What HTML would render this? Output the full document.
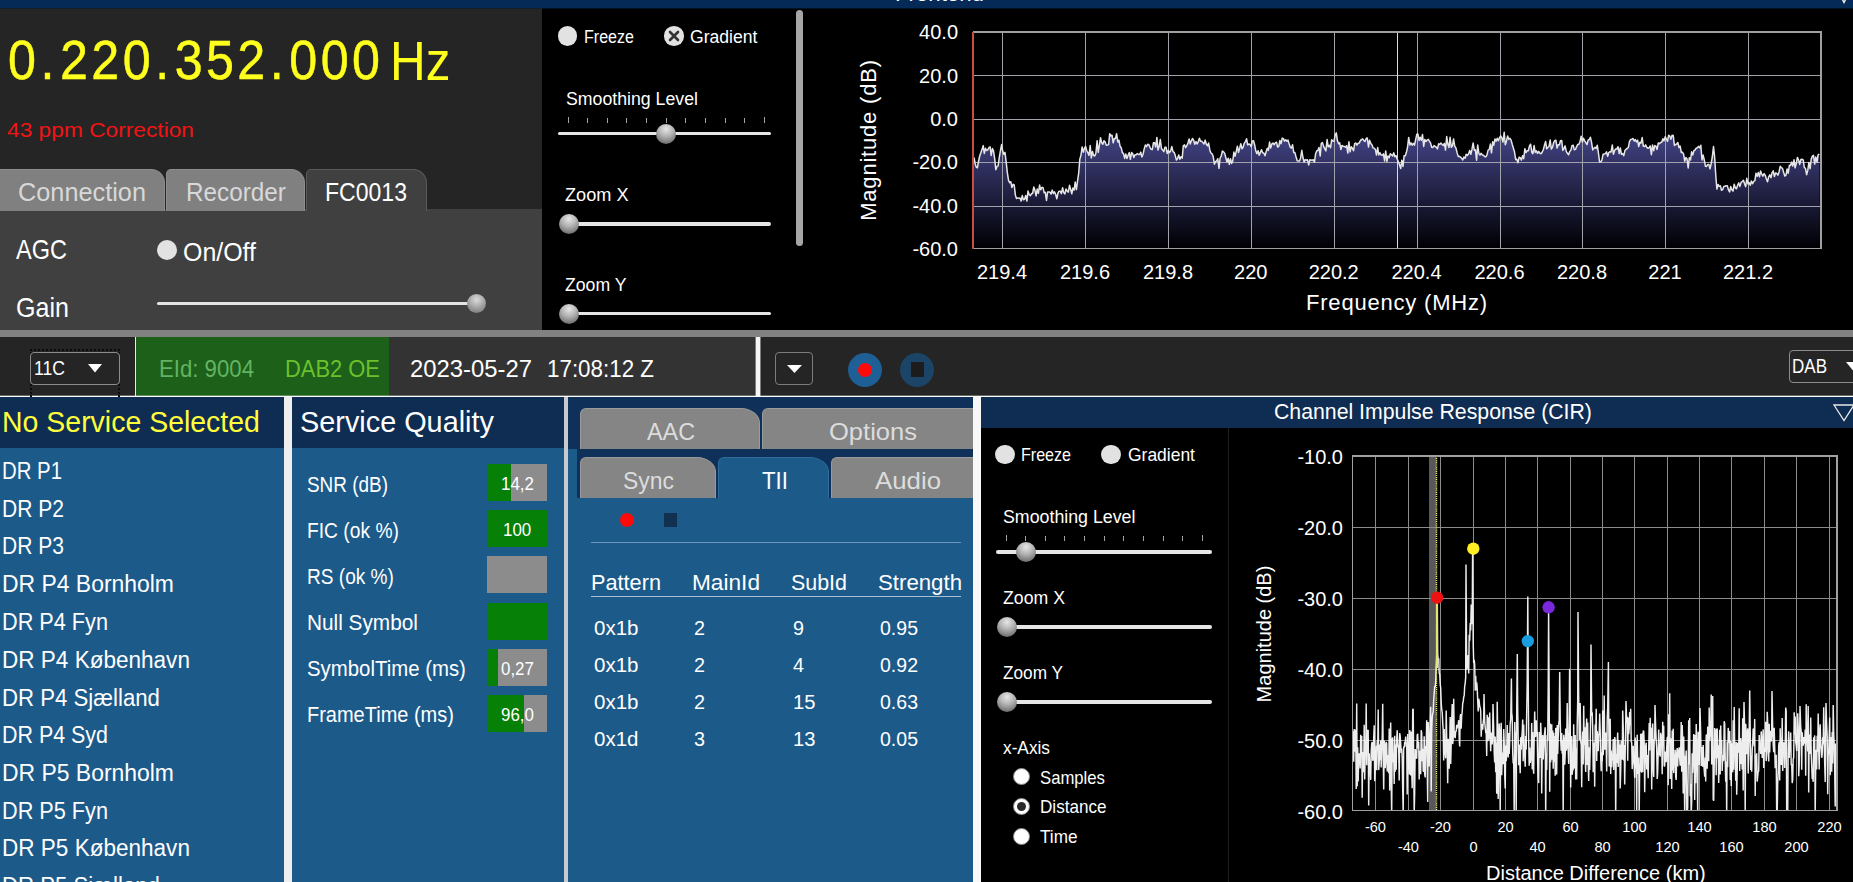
<!DOCTYPE html>
<html><head><meta charset="utf-8"><title>Frontend</title>
<style>
html,body{margin:0;padding:0;background:#000;}
body{width:1853px;height:882px;overflow:hidden;position:relative;font-family:"Liberation Sans",sans-serif;}
#app{position:absolute;left:0;top:0;width:1853px;height:882px;overflow:hidden;background:#000;}
#app div{position:absolute;box-sizing:border-box;}
#app svg{position:absolute;overflow:visible;}
#app svg rect{shape-rendering:crispEdges;}
.t{position:absolute;white-space:pre;transform-origin:0 50%;}
</style></head><body><div id="app">
<div style="left:0px;top:0px;width:1853px;height:8px;background:#052a57;"></div>
<div style="left:0px;top:8px;width:1853px;height:1px;background:#021326;"></div>
<span class="t" style="left:895px;top:-17px;font-size:21.8px;line-height:21.8px;color:#fff;transform:scaleX(1.0200);">Frontend</span>
<svg style="left:1838px;top:-9px" width="12" height="12" viewBox="0 0 12 12"><path d="M0 0 H12 L6 11.5 Z" fill="none" stroke="#f0f0f0" stroke-width="1.4"/></svg>
<div style="left:0px;top:9px;width:542px;height:321px;background:#252525;"></div>
<div style="left:0px;top:8px;width:542px;height:1px;background:#15202c;"></div>
<span class="t" style="left:8px;top:32px;font-size:55.8px;line-height:55.8px;color:#ffff1e;letter-spacing:3.8px;-webkit-text-stroke:0.5px #ffff1e;transform:scaleX(0.9);">0<span style="margin:0 2.3px 0 1.3px">.</span>220<span style="margin:0 2.3px 0 1.3px">.</span>352<span style="margin:0 2.3px 0 1.3px">.</span>000</span>
<span class="t" style="left:389.5px;top:34px;font-size:55.7px;line-height:55.7px;color:#ffff1e;transform:scaleX(0.8887);">Hz</span>
<span class="t" style="left:7px;top:119px;font-size:21.08px;line-height:21.08px;color:#f01414;transform:scaleX(1.0784);">43 ppm Correction</span>
<div style="left:0px;top:209px;width:542px;height:121px;background:#404040;"></div>
<div style="left:0px;top:169px;width:165px;height:42px;background:#808080;border-radius:0 14px 0 0;border-top:1px solid #8e8e8e;border-right:1px solid #8e8e8e;"></div>
<div style="left:166px;top:169px;width:139px;height:42px;background:#808080;border-radius:5px 14px 0 0;border:1px solid #8e8e8e;border-bottom:none;"></div>
<div style="left:306px;top:169px;width:121px;height:42px;background:#404040;border-radius:5px 14px 0 0;border:1px solid #5a5a5a;border-bottom:none;"></div>
<span class="t" style="left:18px;top:180px;font-size:25.87px;line-height:25.87px;color:#d8d8d8;transform:scaleX(0.9780);">Connection</span>
<span class="t" style="left:186px;top:180px;font-size:25.87px;line-height:25.87px;color:#d8d8d8;transform:scaleX(0.9399);">Recorder</span>
<span class="t" style="left:325px;top:180px;font-size:25.87px;line-height:25.87px;color:#fff;transform:scaleX(0.8910);">FC0013</span>
<span class="t" style="left:16px;top:237px;font-size:26.89px;line-height:26.89px;color:#fff;transform:scaleX(0.8752);">AGC</span>
<div style="left:157px;top:240px;width:20px;height:20px;background:#e2e2e2;border-radius:50%;"></div>
<span class="t" style="left:183px;top:240px;font-size:25.44px;line-height:25.44px;color:#fff;transform:scaleX(0.9803);">On/Off</span>
<span class="t" style="left:16px;top:295px;font-size:26.89px;line-height:26.89px;color:#fff;transform:scaleX(0.9331);">Gain</span>
<div style="left:157px;top:301.5px;width:320px;height:3px;background:#e4e4e4;border-radius:2px;"></div>
<div style="left:467px;top:294px;width:19px;height:19px;background:radial-gradient(circle at 50% 30%,#dcdcdc 0%,#a8a8a8 45%,#6c6c6c 100%);border-radius:50%;"></div>
<div style="left:557.75px;top:26.25px;width:19.5px;height:19.5px;background:#e2e2e2;border-radius:50%;"></div>
<span class="t" style="left:584px;top:28px;font-size:18.9px;line-height:18.9px;color:#fff;transform:scaleX(0.8500);">Freeze</span>
<div style="left:664.25px;top:26.25px;width:19.5px;height:19.5px;background:#e2e2e2;border-radius:50%;"></div>
<svg style="left:667px;top:29px" width="14" height="14" viewBox="0 0 14 14"><path d="M3 3 L11 11 M11 3 L3 11" stroke="#333" stroke-width="2.6" stroke-linecap="round"/></svg>
<span class="t" style="left:690px;top:28px;font-size:18.9px;line-height:18.9px;color:#fff;transform:scaleX(0.9312);">Gradient</span>
<span class="t" style="left:565.5px;top:90px;font-size:18.9px;line-height:18.9px;color:#fff;transform:scaleX(0.9376);">Smoothing Level</span>
<div style="left:568px;top:116.5px;width:1px;height:6.5px;background:#a4a4a4;"></div>
<div style="left:587px;top:117.5px;width:1px;height:5.5px;background:#a4a4a4;"></div>
<div style="left:607px;top:117.5px;width:1px;height:5.5px;background:#a4a4a4;"></div>
<div style="left:626px;top:117.5px;width:1px;height:5.5px;background:#a4a4a4;"></div>
<div style="left:646px;top:117.5px;width:1px;height:5.5px;background:#a4a4a4;"></div>
<div style="left:666px;top:117.5px;width:1px;height:5.5px;background:#a4a4a4;"></div>
<div style="left:685px;top:117.5px;width:1px;height:5.5px;background:#a4a4a4;"></div>
<div style="left:705px;top:117.5px;width:1px;height:5.5px;background:#a4a4a4;"></div>
<div style="left:725px;top:117.5px;width:1px;height:5.5px;background:#a4a4a4;"></div>
<div style="left:744px;top:117.5px;width:1px;height:5.5px;background:#a4a4a4;"></div>
<div style="left:764px;top:116.5px;width:1px;height:6.5px;background:#a4a4a4;"></div>
<div style="left:558px;top:131.5px;width:213px;height:3.5px;background:#e6e6e6;border-radius:2px;"></div>
<div style="left:656.0px;top:124.0px;width:20px;height:20px;background:radial-gradient(circle at 50% 25%,#e6e6e6 0%,#b4b4b4 40%,#6a6a6a 85%,#555 100%);border-radius:50%;"></div>
<span class="t" style="left:564.5px;top:186px;font-size:18.9px;line-height:18.9px;color:#fff;transform:scaleX(0.9597);">Zoom X</span>
<div style="left:560px;top:222.0px;width:211px;height:3.5px;background:#e6e6e6;border-radius:2px;"></div>
<div style="left:558.5px;top:214.0px;width:20px;height:20px;background:radial-gradient(circle at 50% 25%,#e6e6e6 0%,#b4b4b4 40%,#6a6a6a 85%,#555 100%);border-radius:50%;"></div>
<span class="t" style="left:564.5px;top:276px;font-size:18.9px;line-height:18.9px;color:#fff;transform:scaleX(0.9343);">Zoom Y</span>
<div style="left:560px;top:311.5px;width:211px;height:3.5px;background:#e6e6e6;border-radius:2px;"></div>
<div style="left:558.5px;top:303.5px;width:20px;height:20px;background:radial-gradient(circle at 50% 25%,#e6e6e6 0%,#b4b4b4 40%,#6a6a6a 85%,#555 100%);border-radius:50%;"></div>
<div style="left:796px;top:10px;width:7px;height:236px;background:#a6a6a6;border-radius:4px;"></div>
<div style="left:0px;top:330px;width:1853px;height:7px;background:#828282;"></div>
<div style="left:0px;top:337px;width:1853px;height:59px;background:#252525;"></div>
<div style="left:389px;top:337px;width:366px;height:59px;background:#333333;"></div>
<div style="left:136px;top:337px;width:253px;height:59px;background:#1c601a;"></div>
<div style="left:135px;top:337px;width:1px;height:59px;background:#e4ece4;"></div>
<div style="left:755px;top:337px;width:6px;height:59px;background:rgba(255,255,255,.4);"></div>
<div style="left:756px;top:337px;width:4px;height:59px;background:#f6f6f6;"></div>
<div style="left:0px;top:395px;width:1853px;height:3px;background:rgba(255,255,255,.3);"></div>
<div style="left:0px;top:396px;width:1853px;height:1px;background:#fff;"></div>
<div style="left:30px;top:349px;width:90px;height:48px;background:transparent;border:2px dotted #0a0a0a;border-bottom:none;"></div>
<div style="left:30px;top:352px;width:90px;height:33px;background:#252525;border:1px solid #8c8c8c;border-radius:4px;"></div>
<span class="t" style="left:34px;top:358px;font-size:20.35px;line-height:20.35px;color:#fff;transform:scaleX(0.8654);">11C</span>
<svg style="left:88px;top:364px" width="14" height="9" viewBox="0 0 14 9"><path d="M0 0 H14 L7 8.5 Z" fill="#fff"/></svg>
<span class="t" style="left:159px;top:357px;font-size:24.71px;line-height:24.71px;color:#62b462;transform:scaleX(0.8980);">EId: 9004</span>
<span class="t" style="left:285px;top:357px;font-size:24.71px;line-height:24.71px;color:#6cc02c;transform:scaleX(0.8869);">DAB2 OE</span>
<span class="t" style="left:410px;top:357px;font-size:24.71px;line-height:24.71px;color:#fff;transform:scaleX(0.9652);">2023-05-27</span>
<span class="t" style="left:547px;top:357px;font-size:24.71px;line-height:24.71px;color:#fff;transform:scaleX(0.9057);">17:08:12 Z</span>
<div style="left:775px;top:352px;width:38px;height:33px;background:#252525;border:1px solid #7c7c7c;border-radius:4px;"></div>
<svg style="left:786.5px;top:364.5px" width="15" height="8" viewBox="0 0 15 8"><path d="M0 0 H15 L7.5 8 Z" fill="#fff"/></svg>
<div style="left:848px;top:352.5px;width:34px;height:34px;background:#1e5f96;border-radius:50%;"></div>
<div style="left:858px;top:362.5px;width:14px;height:14px;background:#ff0a0a;border-radius:50%;"></div>
<div style="left:900px;top:352.5px;width:34px;height:34px;background:#1b4466;border-radius:50%;"></div>
<div style="left:910.5px;top:362px;width:13.5px;height:14.5px;background:#1c1c1c;"></div>
<div style="left:1789px;top:350px;width:80px;height:33px;background:#252525;border:1px solid #8c8c8c;border-radius:4px;"></div>
<span class="t" style="left:1792px;top:357px;font-size:19.62px;line-height:19.62px;color:#fff;transform:scaleX(0.8676);">DAB</span>
<svg style="left:1846px;top:362px" width="14" height="9" viewBox="0 0 14 9"><path d="M0 0 H14 L7 8.5 Z" fill="#fff"/></svg>
<div style="left:0px;top:397px;width:284px;height:51px;background:#0f2c52;"></div>
<div style="left:0px;top:448px;width:284px;height:434px;background:#1c5a8a;"></div>
<span class="t" style="left:2px;top:408px;font-size:29.07px;line-height:29.07px;color:#ffff3c;transform:scaleX(0.9796);">No Service Selected</span>
<span class="t" style="left:2px;top:459px;font-size:23.98px;line-height:23.98px;color:#fff;transform:scaleX(0.8495);">DR P1</span>
<span class="t" style="left:2px;top:497px;font-size:23.98px;line-height:23.98px;color:#fff;transform:scaleX(0.8778);">DR P2</span>
<span class="t" style="left:2px;top:534px;font-size:23.98px;line-height:23.98px;color:#fff;transform:scaleX(0.8778);">DR P3</span>
<span class="t" style="left:2px;top:572px;font-size:23.98px;line-height:23.98px;color:#fff;transform:scaleX(0.9560);">DR P4 Bornholm</span>
<span class="t" style="left:2px;top:610px;font-size:23.98px;line-height:23.98px;color:#fff;transform:scaleX(0.9039);">DR P4 Fyn</span>
<span class="t" style="left:2px;top:648px;font-size:23.98px;line-height:23.98px;color:#fff;transform:scaleX(0.9403);">DR P4 København</span>
<span class="t" style="left:2px;top:686px;font-size:23.98px;line-height:23.98px;color:#fff;transform:scaleX(0.9261);">DR P4 Sjælland</span>
<span class="t" style="left:2px;top:723px;font-size:23.98px;line-height:23.98px;color:#fff;transform:scaleX(0.8937);">DR P4 Syd</span>
<span class="t" style="left:2px;top:761px;font-size:23.98px;line-height:23.98px;color:#fff;transform:scaleX(0.9560);">DR P5 Bornholm</span>
<span class="t" style="left:2px;top:799px;font-size:23.98px;line-height:23.98px;color:#fff;transform:scaleX(0.9039);">DR P5 Fyn</span>
<span class="t" style="left:2px;top:836px;font-size:23.98px;line-height:23.98px;color:#fff;transform:scaleX(0.9403);">DR P5 København</span>
<span class="t" style="left:2px;top:874px;font-size:23.98px;line-height:23.98px;color:#fff;transform:scaleX(0.9261);">DR P5 Sjælland</span>
<div style="left:284px;top:397px;width:8px;height:485px;background:#f0eff0;"></div>
<div style="left:292px;top:397px;width:272px;height:51px;background:#0f2c52;"></div>
<div style="left:292px;top:448px;width:272px;height:434px;background:#1c5a8a;"></div>
<span class="t" style="left:300px;top:408px;font-size:29.07px;line-height:29.07px;color:#fff;transform:scaleX(0.9924);">Service Quality</span>
<span class="t" style="left:307px;top:474px;font-size:22.53px;line-height:22.53px;color:#fff;transform:scaleX(0.8403);">SNR (dB)</span>
<div style="left:487px;top:464px;width:60px;height:37px;background:#8c8c8c;"></div>
<div style="left:487px;top:464px;width:24.0px;height:37px;background:#078007;"></div>
<span class="t" style="left:500.528489546875px;top:475px;font-size:18.2px;line-height:18.2px;color:#fff;transform:scaleX(0.9300);">14,2</span>
<span class="t" style="left:307px;top:520px;font-size:22.53px;line-height:22.53px;color:#fff;transform:scaleX(0.8547);">FIC (ok %)</span>
<div style="left:487px;top:510px;width:60px;height:37px;background:#8c8c8c;"></div>
<div style="left:487px;top:510px;width:60.0px;height:37px;background:#078007;"></div>
<span class="t" style="left:502.87974896875px;top:521px;font-size:18.2px;line-height:18.2px;color:#fff;transform:scaleX(0.9300);">100</span>
<span class="t" style="left:307px;top:566px;font-size:22.53px;line-height:22.53px;color:#fff;transform:scaleX(0.8475);">RS (ok %)</span>
<div style="left:487px;top:556px;width:60px;height:37px;background:#8c8c8c;"></div>
<span class="t" style="left:307px;top:612px;font-size:22.53px;line-height:22.53px;color:#fff;transform:scaleX(0.9235);">Null Symbol</span>
<div style="left:487px;top:603px;width:60px;height:37px;background:#8c8c8c;"></div>
<div style="left:487px;top:603px;width:60.0px;height:37px;background:#078007;"></div>
<span class="t" style="left:307px;top:658px;font-size:22.53px;line-height:22.53px;color:#fff;transform:scaleX(0.9052);">SymbolTime (ms)</span>
<div style="left:487px;top:649px;width:60px;height:37px;background:#8c8c8c;"></div>
<div style="left:487px;top:649px;width:10.8px;height:37px;background:#078007;"></div>
<span class="t" style="left:500.528489546875px;top:660px;font-size:18.2px;line-height:18.2px;color:#fff;transform:scaleX(0.9300);">0,27</span>
<span class="t" style="left:307px;top:704px;font-size:22.53px;line-height:22.53px;color:#fff;transform:scaleX(0.8876);">FrameTime (ms)</span>
<div style="left:487px;top:695px;width:60px;height:37px;background:#8c8c8c;"></div>
<div style="left:487px;top:695px;width:37.2px;height:37px;background:#078007;"></div>
<span class="t" style="left:500.528489546875px;top:706px;font-size:18.2px;line-height:18.2px;color:#fff;transform:scaleX(0.9300);">96,0</span>
<div style="left:564px;top:397px;width:4px;height:485px;background:#c9cacd;"></div>
<div style="left:568px;top:397px;width:405px;height:52px;background:#0f3058;"></div>
<div style="left:568px;top:449px;width:405px;height:433px;background:#1c5a8a;"></div>
<div style="left:577px;top:449px;width:396px;height:49px;background:#0f3058;"></div>
<div style="left:580px;top:408px;width:180px;height:41px;background:#858585;border-radius:6px 19px 0 0 / 6px 15px 0 0;border:1px solid #9a9a9a;border-bottom:none;"></div>
<span class="t" style="left:647px;top:420px;font-size:24.71px;line-height:24.71px;color:#dcdcdc;transform:scaleX(0.9447);">AAC</span>
<div style="left:762px;top:408px;width:211px;height:41px;background:#858585;border-radius:6px 0 0 0;border:1px solid #9a9a9a;border-bottom:none;border-right:none;"></div>
<span class="t" style="left:829px;top:420px;font-size:24.71px;line-height:24.71px;color:#dcdcdc;transform:scaleX(1.0334);">Options</span>
<div style="left:580px;top:457px;width:136px;height:40.5px;background:#858585;border-radius:6px 19px 0 0 / 6px 15px 0 0;border:1px solid #9a9a9a;border-bottom:none;"></div>
<span class="t" style="left:623px;top:469px;font-size:24.71px;line-height:24.71px;color:#dcdcdc;transform:scaleX(0.9284);">Sync</span>
<div style="left:718px;top:457px;width:111px;height:41px;background:#1c5a8a;border-radius:6px 19px 0 0 / 6px 15px 0 0;border:1px solid #2f6c9c;border-bottom:none;"></div>
<span class="t" style="left:762px;top:469px;font-size:24.71px;line-height:24.71px;color:#fff;transform:scaleX(0.9020);">TII</span>
<div style="left:831px;top:457px;width:142px;height:40.5px;background:#858585;border-radius:6px 0 0 0;border:1px solid #9a9a9a;border-bottom:none;border-right:none;"></div>
<span class="t" style="left:875px;top:469px;font-size:24.71px;line-height:24.71px;color:#dcdcdc;transform:scaleX(1.0443);">Audio</span>
<div style="left:620px;top:513px;width:14px;height:14px;background:#ff0a0a;border-radius:50%;"></div>
<div style="left:664px;top:513px;width:13px;height:14px;background:#12304f;"></div>
<div style="left:590.5px;top:542px;width:370.5px;height:1px;background:#6f97ba;"></div>
<span class="t" style="left:591px;top:572px;font-size:21.8px;line-height:21.8px;color:#fff;transform:scaleX(0.9959);">Pattern</span>
<span class="t" style="left:692px;top:572px;font-size:21.8px;line-height:21.8px;color:#fff;transform:scaleX(1.0392);">MainId</span>
<span class="t" style="left:790.5px;top:572px;font-size:21.8px;line-height:21.8px;color:#fff;transform:scaleX(0.9830);">SubId</span>
<span class="t" style="left:877.5px;top:572px;font-size:21.8px;line-height:21.8px;color:#fff;transform:scaleX(1.0193);">Strength</span>
<div style="left:590.5px;top:595.5px;width:370.5px;height:1px;background:#a9c0d4;"></div>
<span class="t" style="left:593.5px;top:618px;font-size:20.35px;line-height:20.35px;color:#fff;transform:scaleX(1.0084);">0x1b</span>
<span class="t" style="left:694px;top:618px;font-size:20.35px;line-height:20.35px;color:#fff;transform:scaleX(0.9719);">2</span>
<span class="t" style="left:793px;top:618px;font-size:20.35px;line-height:20.35px;color:#fff;transform:scaleX(0.9719);">9</span>
<span class="t" style="left:880px;top:618px;font-size:20.35px;line-height:20.35px;color:#fff;transform:scaleX(0.9594);">0.95</span>
<span class="t" style="left:593.5px;top:655px;font-size:20.35px;line-height:20.35px;color:#fff;transform:scaleX(1.0084);">0x1b</span>
<span class="t" style="left:694px;top:655px;font-size:20.35px;line-height:20.35px;color:#fff;transform:scaleX(0.9719);">2</span>
<span class="t" style="left:793px;top:655px;font-size:20.35px;line-height:20.35px;color:#fff;transform:scaleX(0.9719);">4</span>
<span class="t" style="left:880px;top:655px;font-size:20.35px;line-height:20.35px;color:#fff;transform:scaleX(0.9594);">0.92</span>
<span class="t" style="left:593.5px;top:692px;font-size:20.35px;line-height:20.35px;color:#fff;transform:scaleX(1.0084);">0x1b</span>
<span class="t" style="left:694px;top:692px;font-size:20.35px;line-height:20.35px;color:#fff;transform:scaleX(0.9719);">2</span>
<span class="t" style="left:793px;top:692px;font-size:20.35px;line-height:20.35px;color:#fff;transform:scaleX(0.9940);">15</span>
<span class="t" style="left:880px;top:692px;font-size:20.35px;line-height:20.35px;color:#fff;transform:scaleX(0.9594);">0.63</span>
<span class="t" style="left:593.5px;top:729px;font-size:20.35px;line-height:20.35px;color:#fff;transform:scaleX(1.0084);">0x1d</span>
<span class="t" style="left:694px;top:729px;font-size:20.35px;line-height:20.35px;color:#fff;transform:scaleX(0.9719);">3</span>
<span class="t" style="left:793px;top:729px;font-size:20.35px;line-height:20.35px;color:#fff;transform:scaleX(0.9940);">13</span>
<span class="t" style="left:880px;top:729px;font-size:20.35px;line-height:20.35px;color:#fff;transform:scaleX(0.9594);">0.05</span>
<div style="left:973px;top:397px;width:7.5px;height:485px;background:#f8f8f8;"></div>
<div style="left:980.5px;top:397px;width:873px;height:31px;background:#0f2c52;"></div>
<span class="t" style="left:1274px;top:401px;font-size:21.8px;line-height:21.8px;color:#fff;transform:scaleX(0.9756);">Channel Impulse Response (CIR)</span>
<svg style="left:1833px;top:404px" width="22" height="18" viewBox="0 0 22 18"><path d="M1 1 H21 L11 16.5 Z" fill="none" stroke="#e8e8e8" stroke-width="1.3"/></svg>
<div style="left:1228px;top:427.5px;width:1px;height:455px;background:#1e1e1e;"></div>
<div style="left:995.25px;top:444.75px;width:19.5px;height:19.5px;background:#e2e2e2;border-radius:50%;"></div>
<span class="t" style="left:1021px;top:446px;font-size:18.17px;line-height:18.17px;color:#fff;transform:scaleX(0.8842);">Freeze</span>
<div style="left:1101.25px;top:444.75px;width:19.5px;height:19.5px;background:#e2e2e2;border-radius:50%;"></div>
<span class="t" style="left:1128px;top:446px;font-size:18.17px;line-height:18.17px;color:#fff;transform:scaleX(0.9614);">Gradient</span>
<span class="t" style="left:1003px;top:508px;font-size:18.9px;line-height:18.9px;color:#fff;transform:scaleX(0.9411);">Smoothing Level</span>
<div style="left:1006px;top:534.5px;width:1px;height:6.5px;background:#a4a4a4;"></div>
<div style="left:1025px;top:535.5px;width:1px;height:5.5px;background:#a4a4a4;"></div>
<div style="left:1045px;top:535.5px;width:1px;height:5.5px;background:#a4a4a4;"></div>
<div style="left:1064px;top:535.5px;width:1px;height:5.5px;background:#a4a4a4;"></div>
<div style="left:1084px;top:535.5px;width:1px;height:5.5px;background:#a4a4a4;"></div>
<div style="left:1104px;top:535.5px;width:1px;height:5.5px;background:#a4a4a4;"></div>
<div style="left:1123px;top:535.5px;width:1px;height:5.5px;background:#a4a4a4;"></div>
<div style="left:1143px;top:535.5px;width:1px;height:5.5px;background:#a4a4a4;"></div>
<div style="left:1163px;top:535.5px;width:1px;height:5.5px;background:#a4a4a4;"></div>
<div style="left:1182px;top:535.5px;width:1px;height:5.5px;background:#a4a4a4;"></div>
<div style="left:1202px;top:534.5px;width:1px;height:6.5px;background:#a4a4a4;"></div>
<div style="left:996px;top:550.0px;width:216px;height:3.5px;background:#e6e6e6;border-radius:2px;"></div>
<div style="left:1015.5px;top:542.0px;width:20px;height:20px;background:radial-gradient(circle at 50% 25%,#e6e6e6 0%,#b4b4b4 40%,#6a6a6a 85%,#555 100%);border-radius:50%;"></div>
<span class="t" style="left:1003px;top:589px;font-size:18.17px;line-height:18.17px;color:#fff;transform:scaleX(0.9746);">Zoom X</span>
<div style="left:998px;top:625.0px;width:214px;height:3.5px;background:#e6e6e6;border-radius:2px;"></div>
<div style="left:996.5px;top:616.75px;width:20px;height:20px;background:radial-gradient(circle at 50% 25%,#e6e6e6 0%,#b4b4b4 40%,#6a6a6a 85%,#555 100%);border-radius:50%;"></div>
<span class="t" style="left:1003px;top:664px;font-size:18.17px;line-height:18.17px;color:#fff;transform:scaleX(0.9481);">Zoom Y</span>
<div style="left:998px;top:700.0px;width:214px;height:3.5px;background:#e6e6e6;border-radius:2px;"></div>
<div style="left:996.5px;top:691.5px;width:20px;height:20px;background:radial-gradient(circle at 50% 25%,#e6e6e6 0%,#b4b4b4 40%,#6a6a6a 85%,#555 100%);border-radius:50%;"></div>
<span class="t" style="left:1003px;top:739px;font-size:18.17px;line-height:18.17px;color:#fff;transform:scaleX(0.9502);">x-Axis</span>
<div style="left:1012.5px;top:768.0px;width:17px;height:17px;background:#fff;border-radius:50%;border:1.5px solid #8a8a8a;"></div>
<div style="left:1012.5px;top:797.5px;width:17px;height:17px;background:#fff;border-radius:50%;border:1.5px solid #8a8a8a;"></div>
<div style="left:1016.5px;top:801.5px;width:9px;height:9px;background:#2a2a2a;border-radius:50%;"></div>
<div style="left:1012.5px;top:827.5px;width:17px;height:17px;background:#fff;border-radius:50%;border:1.5px solid #8a8a8a;"></div>
<span class="t" style="left:1039.5px;top:769px;font-size:18.17px;line-height:18.17px;color:#fff;transform:scaleX(0.9195);">Samples</span>
<span class="t" style="left:1039.5px;top:798px;font-size:18.17px;line-height:18.17px;color:#fff;transform:scaleX(0.9407);">Distance</span>
<span class="t" style="left:1039.5px;top:828px;font-size:18.17px;line-height:18.17px;color:#fff;transform:scaleX(0.9445);">Time</span>
<svg style="left:973px;top:32px" width="848" height="216" viewBox="0 0 848 216"><defs><linearGradient id="sg" gradientUnits="userSpaceOnUse" x1="0" y1="0" x2="0" y2="216"><stop offset="0" stop-color="#8080fa"/><stop offset="1" stop-color="#000004"/></linearGradient></defs><polygon points="1,216 1.0,125.5 2.1,131.5 3.3,135.4 4.4,135.7 5.6,129.0 6.7,124.0 7.9,120.6 9.0,117.6 10.2,113.6 11.3,121.4 12.5,116.3 13.6,118.5 14.8,117.8 15.9,115.6 17.1,114.9 18.2,123.4 19.4,116.6 20.5,118.8 21.7,126.9 22.8,137.7 24.0,134.4 25.1,133.9 26.3,125.3 27.4,118.9 28.6,112.6 29.7,118.9 30.9,122.3 32.0,120.5 33.2,130.2 34.3,140.4 35.5,148.1 36.6,150.7 37.8,149.7 38.9,155.6 40.1,152.3 41.2,153.0 42.4,163.2 43.5,166.6 44.7,165.9 45.8,166.2 47.0,166.0 48.1,169.0 49.3,163.6 50.4,167.7 51.6,167.2 52.7,163.5 53.9,169.1 55.0,159.0 56.2,162.8 57.3,163.8 58.5,161.6 59.6,161.5 60.8,155.0 61.9,158.0 63.1,163.9 64.2,157.0 65.4,161.3 66.6,153.1 67.7,157.8 68.9,155.4 70.0,155.4 71.2,160.8 72.3,160.3 73.5,168.4 74.6,159.9 75.8,160.0 76.9,160.1 78.1,162.0 79.2,158.1 80.4,161.6 81.5,159.9 82.7,162.5 83.8,166.8 85.0,161.0 86.1,159.2 87.3,159.3 88.4,161.7 89.6,155.7 90.7,160.6 91.9,161.9 93.0,156.9 94.2,159.2 95.3,160.1 96.5,153.3 97.6,157.3 98.8,161.8 99.9,156.0 101.1,158.1 102.2,150.1 103.4,157.6 104.5,149.4 105.7,141.0 106.8,127.3 108.0,123.1 109.1,115.0 110.3,120.2 111.4,116.4 112.6,114.5 113.7,118.5 114.9,120.9 116.0,123.4 117.2,113.5 118.3,125.9 119.5,119.4 120.6,123.6 121.8,123.9 122.9,121.2 124.1,108.7 125.2,120.3 126.4,113.2 127.5,105.8 128.7,110.8 129.8,112.2 131.0,108.8 132.1,110.1 133.3,113.2 134.4,113.0 135.6,112.6 136.7,101.7 137.9,103.9 139.0,103.2 140.2,110.8 141.3,106.5 142.5,106.4 143.6,101.7 144.8,110.0 145.9,108.2 147.1,114.3 148.2,115.8 149.4,120.8 150.5,121.5 151.7,126.4 152.8,122.0 154.0,126.6 155.1,123.3 156.3,120.6 157.4,127.3 158.6,120.6 159.7,121.7 160.9,125.6 162.0,122.7 163.2,122.7 164.3,121.5 165.5,122.5 166.6,122.6 167.8,120.1 168.9,124.9 170.1,122.2 171.2,116.9 172.4,113.0 173.5,114.7 174.7,112.2 175.8,112.6 177.0,115.3 178.1,117.3 179.3,117.6 180.4,110.8 181.6,110.8 182.7,115.1 183.9,105.4 185.0,118.1 186.2,114.3 187.3,107.5 188.5,116.7 189.6,117.9 190.8,119.6 191.9,115.3 193.1,115.3 194.2,121.4 195.4,118.4 196.5,120.7 197.7,118.9 198.8,114.5 200.0,119.6 201.1,120.3 202.3,123.6 203.4,128.1 204.6,126.5 205.7,122.9 206.9,127.2 208.0,124.7 209.2,126.1 210.3,113.9 211.5,112.9 212.6,115.6 213.8,113.7 214.9,111.4 216.1,107.0 217.2,111.9 218.4,108.6 219.5,106.5 220.7,108.5 221.8,112.2 223.0,109.6 224.1,112.0 225.3,109.6 226.4,106.2 227.6,109.2 228.7,109.3 229.9,110.6 231.0,112.0 232.2,108.1 233.3,112.3 234.5,113.8 235.6,110.9 236.8,117.9 237.9,121.0 239.1,121.8 240.2,124.6 241.4,132.2 242.5,129.6 243.7,128.8 244.8,126.7 246.0,136.3 247.1,126.0 248.3,123.8 249.4,119.0 250.6,119.8 251.7,121.4 252.9,126.0 254.0,130.0 255.2,126.3 256.3,132.4 257.5,126.7 258.6,131.4 259.8,128.6 260.9,120.1 262.1,124.2 263.2,119.6 264.4,114.2 265.5,120.4 266.7,116.1 267.8,111.8 269.0,116.7 270.1,115.3 271.3,111.2 272.4,109.6 273.6,106.8 274.7,112.9 275.9,112.1 277.0,112.2 278.2,114.8 279.3,108.9 280.5,108.8 281.6,112.7 282.8,118.9 283.9,121.6 285.1,118.8 286.2,123.3 287.4,120.4 288.5,117.7 289.7,120.7 290.8,121.0 292.0,123.8 293.1,119.9 294.3,116.2 295.4,118.4 296.6,110.1 297.7,116.1 298.9,111.9 300.0,111.0 301.2,112.7 302.3,110.8 303.5,110.2 304.6,115.0 305.8,114.3 306.9,108.5 308.1,111.7 309.2,106.1 310.4,106.6 311.5,109.1 312.7,107.8 313.8,109.2 315.0,108.1 316.1,111.8 317.3,115.3 318.4,116.0 319.6,112.8 320.7,120.5 321.9,120.6 323.0,124.7 324.2,128.8 325.3,128.9 326.5,128.9 327.6,125.9 328.8,118.3 329.9,125.3 331.1,130.1 332.2,127.6 333.4,128.2 334.5,127.7 335.7,132.9 336.8,127.8 338.0,128.0 339.1,128.4 340.3,127.7 341.4,130.3 342.6,121.8 343.7,119.0 344.9,118.3 346.0,115.4 347.2,123.9 348.3,111.4 349.5,110.6 350.6,114.4 351.8,116.8 352.9,118.9 354.1,107.6 355.2,114.7 356.4,113.3 357.5,115.8 358.7,107.7 359.8,109.1 361.0,109.2 362.1,103.6 363.3,100.9 364.4,108.6 365.6,111.8 366.7,110.8 367.9,117.6 369.0,113.4 370.2,114.3 371.3,114.4 372.5,115.2 373.6,113.7 374.8,121.1 375.9,109.8 377.1,119.8 378.2,114.8 379.4,116.3 380.5,118.8 381.7,111.6 382.8,111.0 384.0,113.2 385.1,111.2 386.3,110.9 387.4,108.6 388.6,107.4 389.7,106.9 390.9,108.7 392.0,109.5 393.2,106.4 394.3,106.0 395.5,115.0 396.6,108.2 397.8,111.4 398.9,112.7 400.1,115.9 401.2,116.2 402.4,117.6 403.5,123.0 404.7,115.6 405.8,123.0 407.0,120.7 408.1,123.0 409.3,123.2 410.4,121.9 411.6,128.9 412.7,119.0 413.9,129.3 415.0,123.9 416.2,125.6 417.3,121.8 418.5,122.8 419.6,123.9 420.8,120.9 421.9,124.7 423.1,123.7 424.2,127.1 425.4,129.8 426.5,132.7 427.7,136.5 428.8,128.2 430.0,134.4 431.1,123.8 432.3,123.7 433.4,120.3 434.6,114.8 435.7,105.4 436.9,113.0 438.0,110.9 439.2,113.2 440.3,111.3 441.5,113.1 442.6,107.8 443.8,102.3 444.9,102.0 446.1,108.5 447.2,105.2 448.4,108.3 449.5,102.5 450.7,114.5 451.8,107.5 453.0,109.5 454.1,108.1 455.3,107.4 456.4,109.1 457.6,111.1 458.7,115.3 459.9,115.4 461.0,113.6 462.2,114.5 463.3,115.2 464.5,116.9 465.6,111.8 466.8,112.4 467.9,111.0 469.1,112.5 470.2,113.5 471.4,111.5 472.5,118.1 473.7,104.5 474.8,112.1 476.0,115.5 477.1,105.3 478.3,115.3 479.4,113.8 480.6,107.0 481.7,114.1 482.9,115.9 484.0,120.4 485.2,124.4 486.3,124.3 487.5,125.1 488.6,126.2 489.8,128.0 490.9,125.1 492.1,126.3 493.2,122.3 494.4,123.4 495.5,122.0 496.7,118.5 497.8,122.2 499.0,117.2 500.1,111.1 501.3,118.2 502.4,117.7 503.6,128.2 504.7,113.1 505.9,121.6 507.0,123.0 508.2,121.3 509.3,122.9 510.5,123.2 511.6,124.5 512.8,124.9 513.9,123.1 515.1,118.1 516.2,117.6 517.4,112.1 518.5,120.8 519.7,109.7 520.8,113.2 522.0,106.9 523.1,109.3 524.3,106.2 525.4,108.7 526.6,105.6 527.7,103.9 528.9,106.0 530.0,110.0 531.2,100.3 532.3,112.7 533.5,109.0 534.6,104.1 535.8,107.3 536.9,106.3 538.1,108.1 539.2,112.3 540.4,116.3 541.5,119.8 542.7,127.6 543.8,127.2 545.0,130.7 546.1,125.2 547.3,125.7 548.4,128.1 549.6,123.8 550.7,126.6 551.9,116.7 553.0,120.5 554.2,118.7 555.3,118.7 556.5,114.0 557.6,112.2 558.8,120.2 559.9,121.7 561.1,113.5 562.2,120.4 563.4,118.8 564.5,121.4 565.7,119.4 566.8,121.2 568.0,121.8 569.1,120.3 570.3,117.8 571.4,113.5 572.6,109.4 573.7,116.8 574.9,115.4 576.0,114.5 577.2,108.0 578.3,117.1 579.5,115.1 580.6,110.7 581.8,108.5 582.9,108.2 584.1,116.1 585.2,112.8 586.4,112.7 587.5,108.8 588.7,108.4 589.8,118.4 591.0,116.6 592.1,113.9 593.3,119.4 594.4,121.3 595.6,122.8 596.7,119.6 597.9,118.1 599.0,113.6 600.2,113.2 601.3,117.8 602.5,117.4 603.6,114.6 604.8,112.4 605.9,112.2 607.1,109.2 608.2,104.2 609.4,110.0 610.5,106.3 611.7,108.9 612.8,110.6 614.0,112.5 615.1,108.2 616.3,107.5 617.4,105.2 618.6,110.7 619.7,117.9 620.9,116.2 622.0,115.2 623.2,116.4 624.3,113.3 625.5,121.6 626.6,129.9 627.8,129.8 628.9,128.2 630.1,122.2 631.2,122.1 632.4,121.6 633.5,119.8 634.7,124.3 635.8,120.5 637.0,119.7 638.1,119.9 639.3,113.0 640.4,122.2 641.6,118.4 642.7,117.1 643.9,116.9 645.0,114.7 646.2,121.5 647.3,116.0 648.5,122.3 649.6,121.5 650.8,123.6 651.9,118.6 653.1,117.2 654.2,116.5 655.4,115.2 656.5,109.3 657.7,107.5 658.8,107.1 660.0,106.5 661.1,109.0 662.3,107.6 663.4,109.9 664.6,108.2 665.7,114.5 666.9,110.3 668.0,111.1 669.2,105.6 670.3,114.1 671.5,114.6 672.6,112.9 673.8,115.4 674.9,116.2 676.1,115.8 677.2,114.0 678.4,122.7 679.5,113.0 680.7,118.7 681.8,113.6 683.0,114.2 684.1,117.4 685.3,110.9 686.4,111.8 687.6,110.5 688.7,110.2 689.9,106.8 691.0,108.9 692.2,104.7 693.3,106.8 694.5,109.4 695.6,103.3 696.8,104.2 697.9,107.2 699.1,103.2 700.2,103.4 701.4,113.4 702.5,112.6 703.7,112.0 704.8,110.5 706.0,115.5 707.1,114.0 708.3,120.5 709.4,120.2 710.6,122.1 711.7,129.2 712.9,125.5 714.0,126.8 715.2,136.0 716.3,125.7 717.5,128.0 718.6,119.8 719.8,123.1 720.9,118.6 722.1,118.0 723.2,116.2 724.4,115.8 725.5,114.4 726.7,115.8 727.8,113.3 729.0,128.0 730.1,123.1 731.3,128.0 732.4,134.2 733.6,134.4 734.7,132.4 735.9,132.5 737.0,136.9 738.2,131.5 739.3,125.0 740.5,114.6 741.6,124.6 742.8,143.7 743.9,157.1 745.1,152.4 746.2,154.4 747.4,153.9 748.5,158.2 749.7,157.5 750.8,154.5 752.0,154.3 753.1,153.7 754.3,153.8 755.4,157.6 756.6,160.0 757.7,154.6 758.9,157.8 760.0,159.1 761.2,152.2 762.3,155.8 763.5,156.8 764.6,153.3 765.8,150.9 766.9,154.5 768.1,150.4 769.2,149.6 770.4,148.3 771.5,151.6 772.7,154.6 773.8,146.3 775.0,151.9 776.1,150.6 777.3,153.2 778.4,149.0 779.6,151.8 780.7,149.4 781.9,148.7 783.0,141.2 784.2,144.3 785.3,140.5 786.5,144.8 787.6,138.9 788.8,142.4 789.9,144.1 791.1,141.6 792.2,143.2 793.4,146.9 794.5,149.8 795.7,144.8 796.8,142.8 798.0,145.7 799.1,140.6 800.3,138.9 801.4,144.6 802.6,140.9 803.7,141.4 804.9,143.2 806.0,140.0 807.2,134.3 808.3,135.7 809.5,136.4 810.6,140.3 811.8,144.0 812.9,143.4 814.1,136.9 815.2,141.2 816.4,133.3 817.5,133.5 818.7,130.1 819.8,134.0 821.0,127.8 822.1,135.8 823.3,131.3 824.4,125.4 825.6,128.1 826.7,132.4 827.9,127.5 829.0,127.2 830.2,127.8 831.3,135.4 832.5,136.5 833.6,142.7 834.8,138.2 835.9,130.4 837.1,136.7 838.2,127.1 839.4,124.1 840.5,123.4 841.7,132.1 842.8,124.9 844.0,130.2 845.1,122.9 846.3,122.0 847,216" fill="url(#sg)"/><rect x="29" y="0" width="1" height="216" fill="#a2a2aa"/><rect x="112" y="0" width="1" height="216" fill="#a2a2aa"/><rect x="195" y="0" width="1" height="216" fill="#a2a2aa"/><rect x="278" y="0" width="1" height="216" fill="#a2a2aa"/><rect x="361" y="0" width="1" height="216" fill="#a2a2aa"/><rect x="444" y="0" width="1" height="216" fill="#a2a2aa"/><rect x="527" y="0" width="1" height="216" fill="#a2a2aa"/><rect x="609" y="0" width="1" height="216" fill="#a2a2aa"/><rect x="692" y="0" width="1" height="216" fill="#a2a2aa"/><rect x="775" y="0" width="1" height="216" fill="#a2a2aa"/><rect x="0" y="43" width="848" height="1" fill="#a2a2aa"/><rect x="0" y="87" width="848" height="1" fill="#a2a2aa"/><rect x="0" y="130" width="848" height="1" fill="#a2a2aa"/><rect x="0" y="174" width="848" height="1" fill="#a2a2aa"/><polyline points="1.0,125.5 2.1,131.5 3.3,135.4 4.4,135.7 5.6,129.0 6.7,124.0 7.9,120.6 9.0,117.6 10.2,113.6 11.3,121.4 12.5,116.3 13.6,118.5 14.8,117.8 15.9,115.6 17.1,114.9 18.2,123.4 19.4,116.6 20.5,118.8 21.7,126.9 22.8,137.7 24.0,134.4 25.1,133.9 26.3,125.3 27.4,118.9 28.6,112.6 29.7,118.9 30.9,122.3 32.0,120.5 33.2,130.2 34.3,140.4 35.5,148.1 36.6,150.7 37.8,149.7 38.9,155.6 40.1,152.3 41.2,153.0 42.4,163.2 43.5,166.6 44.7,165.9 45.8,166.2 47.0,166.0 48.1,169.0 49.3,163.6 50.4,167.7 51.6,167.2 52.7,163.5 53.9,169.1 55.0,159.0 56.2,162.8 57.3,163.8 58.5,161.6 59.6,161.5 60.8,155.0 61.9,158.0 63.1,163.9 64.2,157.0 65.4,161.3 66.6,153.1 67.7,157.8 68.9,155.4 70.0,155.4 71.2,160.8 72.3,160.3 73.5,168.4 74.6,159.9 75.8,160.0 76.9,160.1 78.1,162.0 79.2,158.1 80.4,161.6 81.5,159.9 82.7,162.5 83.8,166.8 85.0,161.0 86.1,159.2 87.3,159.3 88.4,161.7 89.6,155.7 90.7,160.6 91.9,161.9 93.0,156.9 94.2,159.2 95.3,160.1 96.5,153.3 97.6,157.3 98.8,161.8 99.9,156.0 101.1,158.1 102.2,150.1 103.4,157.6 104.5,149.4 105.7,141.0 106.8,127.3 108.0,123.1 109.1,115.0 110.3,120.2 111.4,116.4 112.6,114.5 113.7,118.5 114.9,120.9 116.0,123.4 117.2,113.5 118.3,125.9 119.5,119.4 120.6,123.6 121.8,123.9 122.9,121.2 124.1,108.7 125.2,120.3 126.4,113.2 127.5,105.8 128.7,110.8 129.8,112.2 131.0,108.8 132.1,110.1 133.3,113.2 134.4,113.0 135.6,112.6 136.7,101.7 137.9,103.9 139.0,103.2 140.2,110.8 141.3,106.5 142.5,106.4 143.6,101.7 144.8,110.0 145.9,108.2 147.1,114.3 148.2,115.8 149.4,120.8 150.5,121.5 151.7,126.4 152.8,122.0 154.0,126.6 155.1,123.3 156.3,120.6 157.4,127.3 158.6,120.6 159.7,121.7 160.9,125.6 162.0,122.7 163.2,122.7 164.3,121.5 165.5,122.5 166.6,122.6 167.8,120.1 168.9,124.9 170.1,122.2 171.2,116.9 172.4,113.0 173.5,114.7 174.7,112.2 175.8,112.6 177.0,115.3 178.1,117.3 179.3,117.6 180.4,110.8 181.6,110.8 182.7,115.1 183.9,105.4 185.0,118.1 186.2,114.3 187.3,107.5 188.5,116.7 189.6,117.9 190.8,119.6 191.9,115.3 193.1,115.3 194.2,121.4 195.4,118.4 196.5,120.7 197.7,118.9 198.8,114.5 200.0,119.6 201.1,120.3 202.3,123.6 203.4,128.1 204.6,126.5 205.7,122.9 206.9,127.2 208.0,124.7 209.2,126.1 210.3,113.9 211.5,112.9 212.6,115.6 213.8,113.7 214.9,111.4 216.1,107.0 217.2,111.9 218.4,108.6 219.5,106.5 220.7,108.5 221.8,112.2 223.0,109.6 224.1,112.0 225.3,109.6 226.4,106.2 227.6,109.2 228.7,109.3 229.9,110.6 231.0,112.0 232.2,108.1 233.3,112.3 234.5,113.8 235.6,110.9 236.8,117.9 237.9,121.0 239.1,121.8 240.2,124.6 241.4,132.2 242.5,129.6 243.7,128.8 244.8,126.7 246.0,136.3 247.1,126.0 248.3,123.8 249.4,119.0 250.6,119.8 251.7,121.4 252.9,126.0 254.0,130.0 255.2,126.3 256.3,132.4 257.5,126.7 258.6,131.4 259.8,128.6 260.9,120.1 262.1,124.2 263.2,119.6 264.4,114.2 265.5,120.4 266.7,116.1 267.8,111.8 269.0,116.7 270.1,115.3 271.3,111.2 272.4,109.6 273.6,106.8 274.7,112.9 275.9,112.1 277.0,112.2 278.2,114.8 279.3,108.9 280.5,108.8 281.6,112.7 282.8,118.9 283.9,121.6 285.1,118.8 286.2,123.3 287.4,120.4 288.5,117.7 289.7,120.7 290.8,121.0 292.0,123.8 293.1,119.9 294.3,116.2 295.4,118.4 296.6,110.1 297.7,116.1 298.9,111.9 300.0,111.0 301.2,112.7 302.3,110.8 303.5,110.2 304.6,115.0 305.8,114.3 306.9,108.5 308.1,111.7 309.2,106.1 310.4,106.6 311.5,109.1 312.7,107.8 313.8,109.2 315.0,108.1 316.1,111.8 317.3,115.3 318.4,116.0 319.6,112.8 320.7,120.5 321.9,120.6 323.0,124.7 324.2,128.8 325.3,128.9 326.5,128.9 327.6,125.9 328.8,118.3 329.9,125.3 331.1,130.1 332.2,127.6 333.4,128.2 334.5,127.7 335.7,132.9 336.8,127.8 338.0,128.0 339.1,128.4 340.3,127.7 341.4,130.3 342.6,121.8 343.7,119.0 344.9,118.3 346.0,115.4 347.2,123.9 348.3,111.4 349.5,110.6 350.6,114.4 351.8,116.8 352.9,118.9 354.1,107.6 355.2,114.7 356.4,113.3 357.5,115.8 358.7,107.7 359.8,109.1 361.0,109.2 362.1,103.6 363.3,100.9 364.4,108.6 365.6,111.8 366.7,110.8 367.9,117.6 369.0,113.4 370.2,114.3 371.3,114.4 372.5,115.2 373.6,113.7 374.8,121.1 375.9,109.8 377.1,119.8 378.2,114.8 379.4,116.3 380.5,118.8 381.7,111.6 382.8,111.0 384.0,113.2 385.1,111.2 386.3,110.9 387.4,108.6 388.6,107.4 389.7,106.9 390.9,108.7 392.0,109.5 393.2,106.4 394.3,106.0 395.5,115.0 396.6,108.2 397.8,111.4 398.9,112.7 400.1,115.9 401.2,116.2 402.4,117.6 403.5,123.0 404.7,115.6 405.8,123.0 407.0,120.7 408.1,123.0 409.3,123.2 410.4,121.9 411.6,128.9 412.7,119.0 413.9,129.3 415.0,123.9 416.2,125.6 417.3,121.8 418.5,122.8 419.6,123.9 420.8,120.9 421.9,124.7 423.1,123.7 424.2,127.1 425.4,129.8 426.5,132.7 427.7,136.5 428.8,128.2 430.0,134.4 431.1,123.8 432.3,123.7 433.4,120.3 434.6,114.8 435.7,105.4 436.9,113.0 438.0,110.9 439.2,113.2 440.3,111.3 441.5,113.1 442.6,107.8 443.8,102.3 444.9,102.0 446.1,108.5 447.2,105.2 448.4,108.3 449.5,102.5 450.7,114.5 451.8,107.5 453.0,109.5 454.1,108.1 455.3,107.4 456.4,109.1 457.6,111.1 458.7,115.3 459.9,115.4 461.0,113.6 462.2,114.5 463.3,115.2 464.5,116.9 465.6,111.8 466.8,112.4 467.9,111.0 469.1,112.5 470.2,113.5 471.4,111.5 472.5,118.1 473.7,104.5 474.8,112.1 476.0,115.5 477.1,105.3 478.3,115.3 479.4,113.8 480.6,107.0 481.7,114.1 482.9,115.9 484.0,120.4 485.2,124.4 486.3,124.3 487.5,125.1 488.6,126.2 489.8,128.0 490.9,125.1 492.1,126.3 493.2,122.3 494.4,123.4 495.5,122.0 496.7,118.5 497.8,122.2 499.0,117.2 500.1,111.1 501.3,118.2 502.4,117.7 503.6,128.2 504.7,113.1 505.9,121.6 507.0,123.0 508.2,121.3 509.3,122.9 510.5,123.2 511.6,124.5 512.8,124.9 513.9,123.1 515.1,118.1 516.2,117.6 517.4,112.1 518.5,120.8 519.7,109.7 520.8,113.2 522.0,106.9 523.1,109.3 524.3,106.2 525.4,108.7 526.6,105.6 527.7,103.9 528.9,106.0 530.0,110.0 531.2,100.3 532.3,112.7 533.5,109.0 534.6,104.1 535.8,107.3 536.9,106.3 538.1,108.1 539.2,112.3 540.4,116.3 541.5,119.8 542.7,127.6 543.8,127.2 545.0,130.7 546.1,125.2 547.3,125.7 548.4,128.1 549.6,123.8 550.7,126.6 551.9,116.7 553.0,120.5 554.2,118.7 555.3,118.7 556.5,114.0 557.6,112.2 558.8,120.2 559.9,121.7 561.1,113.5 562.2,120.4 563.4,118.8 564.5,121.4 565.7,119.4 566.8,121.2 568.0,121.8 569.1,120.3 570.3,117.8 571.4,113.5 572.6,109.4 573.7,116.8 574.9,115.4 576.0,114.5 577.2,108.0 578.3,117.1 579.5,115.1 580.6,110.7 581.8,108.5 582.9,108.2 584.1,116.1 585.2,112.8 586.4,112.7 587.5,108.8 588.7,108.4 589.8,118.4 591.0,116.6 592.1,113.9 593.3,119.4 594.4,121.3 595.6,122.8 596.7,119.6 597.9,118.1 599.0,113.6 600.2,113.2 601.3,117.8 602.5,117.4 603.6,114.6 604.8,112.4 605.9,112.2 607.1,109.2 608.2,104.2 609.4,110.0 610.5,106.3 611.7,108.9 612.8,110.6 614.0,112.5 615.1,108.2 616.3,107.5 617.4,105.2 618.6,110.7 619.7,117.9 620.9,116.2 622.0,115.2 623.2,116.4 624.3,113.3 625.5,121.6 626.6,129.9 627.8,129.8 628.9,128.2 630.1,122.2 631.2,122.1 632.4,121.6 633.5,119.8 634.7,124.3 635.8,120.5 637.0,119.7 638.1,119.9 639.3,113.0 640.4,122.2 641.6,118.4 642.7,117.1 643.9,116.9 645.0,114.7 646.2,121.5 647.3,116.0 648.5,122.3 649.6,121.5 650.8,123.6 651.9,118.6 653.1,117.2 654.2,116.5 655.4,115.2 656.5,109.3 657.7,107.5 658.8,107.1 660.0,106.5 661.1,109.0 662.3,107.6 663.4,109.9 664.6,108.2 665.7,114.5 666.9,110.3 668.0,111.1 669.2,105.6 670.3,114.1 671.5,114.6 672.6,112.9 673.8,115.4 674.9,116.2 676.1,115.8 677.2,114.0 678.4,122.7 679.5,113.0 680.7,118.7 681.8,113.6 683.0,114.2 684.1,117.4 685.3,110.9 686.4,111.8 687.6,110.5 688.7,110.2 689.9,106.8 691.0,108.9 692.2,104.7 693.3,106.8 694.5,109.4 695.6,103.3 696.8,104.2 697.9,107.2 699.1,103.2 700.2,103.4 701.4,113.4 702.5,112.6 703.7,112.0 704.8,110.5 706.0,115.5 707.1,114.0 708.3,120.5 709.4,120.2 710.6,122.1 711.7,129.2 712.9,125.5 714.0,126.8 715.2,136.0 716.3,125.7 717.5,128.0 718.6,119.8 719.8,123.1 720.9,118.6 722.1,118.0 723.2,116.2 724.4,115.8 725.5,114.4 726.7,115.8 727.8,113.3 729.0,128.0 730.1,123.1 731.3,128.0 732.4,134.2 733.6,134.4 734.7,132.4 735.9,132.5 737.0,136.9 738.2,131.5 739.3,125.0 740.5,114.6 741.6,124.6 742.8,143.7 743.9,157.1 745.1,152.4 746.2,154.4 747.4,153.9 748.5,158.2 749.7,157.5 750.8,154.5 752.0,154.3 753.1,153.7 754.3,153.8 755.4,157.6 756.6,160.0 757.7,154.6 758.9,157.8 760.0,159.1 761.2,152.2 762.3,155.8 763.5,156.8 764.6,153.3 765.8,150.9 766.9,154.5 768.1,150.4 769.2,149.6 770.4,148.3 771.5,151.6 772.7,154.6 773.8,146.3 775.0,151.9 776.1,150.6 777.3,153.2 778.4,149.0 779.6,151.8 780.7,149.4 781.9,148.7 783.0,141.2 784.2,144.3 785.3,140.5 786.5,144.8 787.6,138.9 788.8,142.4 789.9,144.1 791.1,141.6 792.2,143.2 793.4,146.9 794.5,149.8 795.7,144.8 796.8,142.8 798.0,145.7 799.1,140.6 800.3,138.9 801.4,144.6 802.6,140.9 803.7,141.4 804.9,143.2 806.0,140.0 807.2,134.3 808.3,135.7 809.5,136.4 810.6,140.3 811.8,144.0 812.9,143.4 814.1,136.9 815.2,141.2 816.4,133.3 817.5,133.5 818.7,130.1 819.8,134.0 821.0,127.8 822.1,135.8 823.3,131.3 824.4,125.4 825.6,128.1 826.7,132.4 827.9,127.5 829.0,127.2 830.2,127.8 831.3,135.4 832.5,136.5 833.6,142.7 834.8,138.2 835.9,130.4 837.1,136.7 838.2,127.1 839.4,124.1 840.5,123.4 841.7,132.1 842.8,124.9 844.0,130.2 845.1,122.9 846.3,122.0" fill="none" stroke="#e6e6e6" stroke-width="1.5" stroke-linejoin="round"/><rect x="424" y="0" width="1" height="216" fill="#f2f23c"/><rect x="0" y="-1" width="849" height="2" fill="#a0a0a0"/><rect x="0" y="216" width="849" height="1" fill="#a0a0a0"/><rect x="847" y="-1" width="2" height="218" fill="#a0a0a0"/><rect x="-1" y="0" width="2" height="217" fill="#cc4c44"/></svg>
<span class="t" style="left:919.1px;top:22px;font-size:20px;line-height:20px;color:#fff;">40.0</span>
<span class="t" style="left:919.1px;top:66px;font-size:20px;line-height:20px;color:#fff;">20.0</span>
<span class="t" style="left:930.2px;top:109px;font-size:20px;line-height:20px;color:#fff;">0.0</span>
<span class="t" style="left:912.4px;top:152px;font-size:20px;line-height:20px;color:#fff;">-20.0</span>
<span class="t" style="left:912.4px;top:196px;font-size:20px;line-height:20px;color:#fff;">-40.0</span>
<span class="t" style="left:912.4px;top:239px;font-size:20px;line-height:20px;color:#fff;">-60.0</span>
<span class="t" style="left:977.0px;top:262px;font-size:20px;line-height:20px;color:#fff;">219.4</span>
<span class="t" style="left:1060.0px;top:262px;font-size:20px;line-height:20px;color:#fff;">219.6</span>
<span class="t" style="left:1143.0px;top:262px;font-size:20px;line-height:20px;color:#fff;">219.8</span>
<span class="t" style="left:1234.1px;top:262px;font-size:20px;line-height:20px;color:#fff;">220</span>
<span class="t" style="left:1308.7px;top:262px;font-size:20px;line-height:20px;color:#fff;">220.2</span>
<span class="t" style="left:1391.5px;top:262px;font-size:20px;line-height:20px;color:#fff;">220.4</span>
<span class="t" style="left:1474.5px;top:262px;font-size:20px;line-height:20px;color:#fff;">220.6</span>
<span class="t" style="left:1557.0px;top:262px;font-size:20px;line-height:20px;color:#fff;">220.8</span>
<span class="t" style="left:1648.3px;top:262px;font-size:20px;line-height:20px;color:#fff;">221</span>
<span class="t" style="left:1723.0px;top:262px;font-size:20px;line-height:20px;color:#fff;">221.2</span>
<span class="t" style="left:1306.0px;top:292px;font-size:22px;line-height:22px;color:#fff;letter-spacing:0.8px;">Frequency (MHz)</span>
<span class="t" style="left:788.2px;top:129.0px;font-size:22px;line-height:22px;color:#fff;letter-spacing:0.8px;transform-origin:50% 50%;transform:rotate(-90deg);">Magnitude (dB)</span>
<svg style="left:1352px;top:456px" width="485" height="354" viewBox="0 0 485 354"><defs><clipPath id="cc"><rect x="0" y="0" width="485" height="354"/></clipPath></defs><rect x="77" y="0" width="7" height="354" fill="#585858"/><rect x="23" y="0" width="1" height="354" fill="#8c8c8c"/><rect x="56" y="0" width="1" height="354" fill="#8c8c8c"/><rect x="88" y="0" width="1" height="354" fill="#8c8c8c"/><rect x="121" y="0" width="1" height="354" fill="#8c8c8c"/><rect x="153" y="0" width="1" height="354" fill="#8c8c8c"/><rect x="185" y="0" width="1" height="354" fill="#8c8c8c"/><rect x="218" y="0" width="1" height="354" fill="#8c8c8c"/><rect x="250" y="0" width="1" height="354" fill="#8c8c8c"/><rect x="282" y="0" width="1" height="354" fill="#8c8c8c"/><rect x="315" y="0" width="1" height="354" fill="#8c8c8c"/><rect x="347" y="0" width="1" height="354" fill="#8c8c8c"/><rect x="379" y="0" width="1" height="354" fill="#8c8c8c"/><rect x="412" y="0" width="1" height="354" fill="#8c8c8c"/><rect x="444" y="0" width="1" height="354" fill="#8c8c8c"/><rect x="477" y="0" width="1" height="354" fill="#8c8c8c"/><rect x="0" y="71" width="485" height="1" fill="#8c8c8c"/><rect x="0" y="142" width="485" height="1" fill="#8c8c8c"/><rect x="0" y="213" width="485" height="1" fill="#8c8c8c"/><rect x="0" y="284" width="485" height="1" fill="#8c8c8c"/><polyline clip-path="url(#cc)" points="1.2,275.0 1.7,305.8 2.2,273.1 2.7,295.8 3.2,275.1 3.7,273.7 4.2,332.9 4.7,247.4 5.2,330.3 5.7,291.2 6.2,325.6 6.7,299.7 7.2,297.3 7.7,302.8 8.2,312.5 8.7,278.8 9.2,286.6 9.7,280.0 10.2,341.8 10.7,296.1 11.2,299.5 11.7,316.2 12.2,268.8 12.7,323.5 13.2,297.4 13.7,296.5 14.2,247.4 14.7,309.3 15.2,275.5 15.7,274.3 16.2,274.0 16.7,349.4 17.2,297.2 17.7,307.8 18.2,310.1 18.7,323.9 19.2,295.9 19.7,287.5 20.2,286.1 20.7,304.7 21.2,303.6 21.7,282.5 22.2,269.2 22.7,325.3 23.2,313.2 23.7,296.2 24.2,289.8 24.7,314.3 25.2,285.3 25.7,290.3 26.2,253.4 26.7,314.1 27.2,306.9 27.7,288.5 28.2,304.3 28.7,284.6 29.2,311.4 29.7,292.6 30.2,282.0 30.7,247.7 31.2,299.7 31.7,333.4 32.2,284.7 32.7,288.5 33.2,312.3 33.7,304.1 34.2,286.0 34.7,287.4 35.2,315.4 35.7,298.9 36.2,307.0 36.7,317.1 37.2,272.5 37.7,334.5 38.2,288.4 38.7,266.6 39.2,327.7 39.7,358.0 40.2,283.5 40.7,281.4 41.2,306.3 41.7,297.0 42.2,328.0 42.7,279.7 43.2,315.8 43.7,288.5 44.2,313.8 44.7,283.5 45.2,274.4 45.7,285.9 46.2,291.3 46.7,292.3 47.2,324.5 47.7,277.1 48.2,280.1 48.7,287.6 49.2,297.0 49.7,292.6 50.2,301.5 50.7,332.9 51.2,358.0 51.7,290.4 52.2,291.7 52.7,286.1 53.2,286.6 53.7,280.6 54.2,291.0 54.7,286.7 55.2,338.4 55.7,278.0 56.2,293.0 56.7,308.6 57.2,318.4 57.7,273.9 58.2,309.5 58.7,319.4 59.2,275.4 59.7,313.9 60.2,332.2 60.7,253.8 61.2,252.8 61.7,306.3 62.2,358.0 62.7,335.6 63.2,293.1 63.7,298.5 64.2,301.6 64.7,302.6 65.2,279.0 65.7,277.9 66.2,292.2 66.7,286.0 67.2,323.4 67.7,298.8 68.2,294.7 68.7,318.3 69.2,274.2 69.7,277.1 70.2,305.3 70.7,292.7 71.2,314.6 71.7,315.7 72.2,280.3 72.7,318.2 73.2,321.5 73.7,290.1 74.2,291.2 74.7,264.3 75.2,308.5 75.7,345.9 76.2,266.0 76.7,289.7 77.2,310.4 77.7,283.9 78.2,267.7 78.7,250.8 79.2,335.6 79.7,275.7 80.2,261.8 80.7,257.6 81.2,255.8 81.7,243.9 82.2,237.1 82.7,230.0 83.2,231.0 83.7,225.4 84.2,209.8 84.7,199.7 85.3,144.0 85.7,198.4 86.2,203.3 86.7,202.2 87.2,217.3 87.7,218.1 88.2,228.3 88.7,232.1 89.2,246.0 89.7,253.7 90.2,256.4 90.7,266.6 91.2,273.8 91.7,304.5 92.2,272.9 92.7,297.8 93.2,297.5 93.7,302.3 94.2,254.5 94.7,282.5 95.2,293.2 95.7,327.2 96.2,282.7 96.7,307.6 97.2,312.8 97.7,288.6 98.2,261.0 98.7,308.0 99.2,288.0 99.7,264.0 100.2,248.0 100.7,288.1 101.2,282.4 101.7,242.8 102.2,279.6 102.7,280.3 103.2,282.1 103.7,274.7 104.2,275.8 104.7,268.9 105.2,272.5 105.7,269.2 106.2,268.8 106.7,264.2 107.2,282.4 107.7,290.4 108.2,260.1 108.7,258.1 109.2,272.7 109.7,259.9 110.2,256.0 110.7,247.5 111.2,245.6 111.7,241.2 112.2,239.4 112.7,230.1 113.2,227.1 113.7,221.3 114.0,108.5 114.7,213.6 115.2,210.8 115.7,203.7 116.2,199.1 116.7,217.5 117.2,178.8 117.7,184.7 118.2,167.1 118.7,174.4 119.2,148.6 119.7,160.0 120.2,168.3 120.6,97.0 121.2,187.8 121.7,207.1 122.2,203.8 122.7,208.5 123.2,234.8 123.7,219.8 124.2,234.2 124.7,226.3 125.2,232.0 125.7,244.5 126.2,255.4 126.7,242.7 127.2,245.3 127.7,250.3 128.2,251.5 128.7,254.8 129.2,280.7 129.7,268.1 130.2,271.4 130.7,273.8 131.2,266.8 131.7,262.2 132.0,238.0 132.7,265.6 133.2,271.3 133.7,276.5 134.2,277.1 134.7,300.1 135.2,258.7 135.7,284.9 136.2,283.9 136.7,261.2 137.2,283.4 137.7,256.4 138.2,280.1 138.7,295.3 139.2,276.6 139.7,287.7 140.2,288.3 140.7,273.5 141.0,248.0 141.7,273.2 142.2,296.6 142.7,306.4 143.2,280.4 143.7,316.3 144.2,286.5 144.7,337.8 145.2,245.8 145.7,275.8 146.2,343.1 146.7,306.5 147.2,267.6 147.7,285.3 148.2,358.0 148.7,277.9 149.2,266.8 149.7,319.2 150.2,296.5 150.7,300.4 151.2,308.2 151.7,273.1 152.2,286.7 152.7,317.8 153.2,332.4 153.7,289.4 154.2,305.1 154.7,298.2 155.2,268.9 155.7,292.3 156.2,301.4 156.7,277.0 157.2,297.9 157.7,285.1 158.2,267.8 158.7,263.4 159.4,222.6 159.7,257.1 160.2,261.1 160.7,296.6 161.2,307.4 161.7,303.4 162.2,358.0 162.7,266.0 163.2,285.7 163.7,276.2 164.2,358.0 164.7,254.9 165.3,198.0 165.7,251.7 166.2,284.1 166.7,309.3 167.2,288.5 167.7,304.6 168.2,317.3 168.7,281.2 169.2,293.8 169.7,282.0 170.2,276.6 170.7,263.6 171.2,305.3 171.7,268.4 172.2,295.6 172.7,299.1 173.2,310.7 173.7,279.9 174.2,293.6 174.7,255.8 175.2,226.2 175.8,140.4 176.2,223.7 176.7,285.4 177.2,309.8 177.7,291.4 178.2,306.9 178.7,303.1 179.2,303.6 179.7,267.0 180.2,313.2 180.7,276.0 181.2,312.3 181.7,317.8 182.2,281.6 182.7,255.6 183.2,280.7 183.7,280.4 184.2,264.3 184.7,276.1 185.2,276.1 185.7,309.0 186.2,322.4 186.7,327.1 187.2,275.9 187.7,283.8 188.2,302.1 188.7,266.7 189.2,279.8 189.7,337.4 190.2,296.3 190.7,278.9 191.2,303.4 191.7,291.9 192.2,280.6 192.7,276.1 193.2,271.3 193.7,358.0 194.2,297.2 194.7,314.0 195.2,278.9 195.7,284.3 196.2,230.9 196.6,156.0 197.2,243.6 197.7,335.7 198.2,267.6 198.7,306.3 199.2,289.3 199.7,268.2 200.2,303.7 200.7,274.4 201.2,312.7 201.7,276.7 202.2,306.0 202.7,280.0 203.2,319.7 203.7,271.9 204.2,280.9 204.7,318.6 205.2,268.9 205.7,298.0 206.2,281.5 206.7,268.3 207.2,264.4 207.7,216.0 208.2,262.5 208.7,283.4 209.2,294.6 209.7,277.0 210.2,297.8 210.7,284.3 211.2,358.0 211.7,278.7 212.2,284.1 212.7,308.8 213.2,298.4 213.7,272.4 214.2,294.6 214.7,290.7 215.2,247.0 215.7,289.5 216.2,294.3 216.7,307.9 217.2,259.7 217.6,212.7 218.2,267.7 218.7,331.5 219.2,281.1 219.7,280.3 220.2,318.6 220.7,312.3 221.2,314.2 221.7,268.2 222.2,312.5 222.7,281.6 223.2,279.0 223.7,323.5 224.2,292.2 224.7,323.4 225.2,269.4 225.7,245.0 226.0,156.0 226.7,239.5 227.2,284.0 227.7,283.0 228.2,247.0 228.7,285.1 229.2,288.8 229.7,331.2 230.2,289.6 230.7,275.5 231.2,308.4 231.7,249.8 232.2,289.1 232.7,271.3 233.2,301.7 233.7,316.0 234.2,271.9 234.7,262.6 235.2,309.0 235.7,266.4 236.2,307.7 236.7,325.1 237.2,291.3 237.7,314.1 238.2,293.4 238.7,250.5 239.0,188.4 239.7,260.0 240.2,256.2 240.7,272.9 241.2,316.2 241.7,292.1 242.2,286.4 242.7,330.7 243.2,268.5 243.7,279.5 244.2,252.7 244.7,305.1 245.2,275.1 245.7,286.8 246.2,295.2 246.7,279.0 247.2,276.6 247.7,257.4 248.2,274.5 248.7,300.9 249.2,315.3 249.7,296.2 250.2,305.0 250.7,254.4 251.2,299.2 251.7,283.0 252.2,239.4 252.7,293.7 253.2,288.1 253.7,276.5 254.2,290.9 254.7,315.6 255.2,263.2 255.7,251.6 256.4,206.0 256.7,259.3 257.2,310.4 257.7,271.7 258.2,262.8 258.7,318.0 259.2,294.6 259.7,311.1 260.2,298.2 260.7,303.6 261.2,283.1 261.7,313.9 262.2,300.5 262.7,281.0 263.2,284.1 263.7,358.0 264.2,297.9 264.7,307.0 265.2,287.3 265.7,276.6 266.2,310.9 266.7,284.0 267.2,294.6 267.7,288.6 268.2,332.6 268.7,314.9 269.2,284.8 269.7,290.1 270.2,303.8 270.7,254.6 271.2,270.9 271.7,304.4 272.2,289.1 272.7,328.6 273.2,296.4 273.7,270.0 274.0,245.0 274.7,266.7 275.2,260.8 275.7,304.8 276.2,261.4 276.7,278.2 277.2,272.1 277.7,256.0 278.2,269.1 278.7,252.7 279.2,286.3 279.7,285.9 280.2,313.1 280.7,300.2 281.2,289.8 281.7,305.3 282.2,309.1 282.7,321.9 283.2,281.6 283.7,312.5 284.2,285.1 284.7,358.0 285.2,278.8 285.7,306.2 286.2,318.0 286.7,301.4 287.2,358.0 287.7,308.2 288.2,315.8 288.7,277.8 289.2,302.7 289.7,316.7 290.2,277.2 290.7,315.9 291.2,275.1 291.7,274.7 292.2,287.1 292.7,336.2 293.2,298.3 293.7,290.1 294.2,286.7 294.7,313.5 295.2,298.9 295.7,308.7 296.2,322.3 296.7,293.2 297.2,267.0 297.7,294.5 298.2,261.7 298.7,280.6 299.2,271.8 299.7,333.4 300.2,284.1 300.7,267.6 301.2,311.0 301.7,321.0 302.2,283.4 302.7,283.2 303.0,249.0 303.7,272.3 304.2,284.4 304.7,292.9 305.2,323.0 305.7,315.7 306.2,297.6 306.7,273.5 307.2,299.2 307.7,289.6 308.2,300.7 308.7,276.8 309.2,290.6 309.7,278.4 310.2,318.2 310.7,265.8 311.2,287.3 311.7,269.8 312.2,310.1 312.7,310.1 313.2,295.6 313.7,297.6 314.2,306.3 314.7,292.2 315.2,281.7 315.7,280.7 316.2,329.3 316.7,258.3 317.2,287.3 317.7,237.2 318.2,322.9 318.7,298.9 319.2,282.3 319.7,333.1 320.2,274.6 320.7,314.4 321.2,272.7 321.7,317.1 322.2,302.8 322.7,305.6 323.2,293.8 323.7,321.1 324.2,324.0 324.7,297.6 325.2,292.1 325.7,310.6 326.2,293.6 326.7,301.6 327.2,291.4 327.7,302.8 328.2,309.7 328.7,293.8 329.2,265.9 329.7,315.7 330.2,269.0 330.7,285.8 331.2,337.4 331.7,280.5 332.2,312.9 332.7,358.0 333.2,299.7 333.7,304.3 334.2,294.5 334.7,358.0 335.2,358.0 335.7,351.4 336.2,309.3 336.7,264.3 337.2,308.4 337.7,262.1 338.2,340.2 338.7,328.0 339.2,358.0 339.7,345.3 340.2,297.3 340.7,317.0 341.2,302.3 341.7,278.1 342.2,286.9 342.7,343.9 343.2,279.0 343.7,327.2 344.2,268.0 344.7,286.2 345.2,307.5 345.7,358.0 346.2,275.7 346.7,293.7 347.2,309.1 347.7,271.2 348.0,252.0 348.7,277.4 349.2,310.0 349.7,291.1 350.2,302.2 350.7,310.8 351.2,289.0 351.7,307.4 352.2,313.8 352.7,320.6 353.2,301.6 353.7,325.5 354.2,279.3 354.7,278.6 355.2,312.7 355.7,270.5 356.2,278.5 356.7,305.2 357.2,251.5 357.7,284.4 358.2,273.9 358.7,280.6 359.2,238.5 359.7,308.4 360.2,289.5 360.7,239.9 361.2,343.7 361.7,344.8 362.2,312.2 362.7,272.0 363.2,302.3 363.7,273.4 364.2,319.3 364.7,273.3 365.2,272.6 365.7,302.3 366.2,289.2 366.7,327.0 367.2,300.3 367.7,273.7 368.2,318.6 368.7,269.6 369.2,297.9 369.7,284.1 370.2,315.0 370.7,298.9 371.2,305.0 371.7,304.0 372.2,265.2 372.7,268.0 373.2,302.8 373.7,325.8 374.2,305.4 374.7,358.0 375.2,285.6 375.7,311.2 376.2,271.9 376.7,277.3 377.2,287.0 377.7,275.1 378.2,323.9 378.7,285.1 379.2,329.9 379.7,293.1 380.2,287.2 380.7,316.3 381.2,264.3 381.7,313.7 382.2,251.1 382.7,292.3 383.2,296.9 383.7,324.7 384.2,286.0 384.7,338.7 385.2,315.2 385.7,286.8 386.2,287.8 386.7,296.7 387.2,252.3 387.7,315.1 388.2,287.7 388.7,282.1 389.2,308.1 389.7,285.6 390.2,313.6 390.7,262.3 391.2,334.4 391.7,272.2 392.0,246.0 392.7,273.4 393.2,358.0 393.7,267.7 394.2,277.3 394.7,298.3 395.2,282.3 395.7,272.4 396.2,317.4 396.7,293.2 397.2,275.1 397.7,234.4 398.2,272.6 398.7,313.9 399.2,299.7 399.7,315.8 400.2,293.6 400.7,286.5 401.2,272.8 401.7,273.3 402.2,290.3 402.7,263.1 403.2,340.1 403.7,298.6 404.2,315.5 404.7,297.3 405.2,325.6 405.7,320.6 406.2,315.5 406.7,315.4 407.2,279.0 407.7,292.8 408.2,288.8 408.7,298.0 409.2,275.4 409.7,286.9 410.2,302.0 410.7,285.6 411.2,273.4 411.7,311.9 412.2,291.7 412.7,295.8 413.2,291.2 413.7,265.7 414.2,305.1 414.7,296.0 415.2,255.7 415.7,266.7 416.2,293.4 416.7,305.4 417.2,267.8 417.7,296.4 418.2,274.7 418.7,285.2 419.2,285.0 419.7,276.6 420.0,235.0 420.7,272.2 421.2,288.5 421.7,296.3 422.2,271.7 422.7,290.1 423.2,312.3 423.7,307.2 424.2,298.8 424.7,358.0 425.2,358.0 425.7,327.7 426.2,315.7 426.7,289.8 427.2,286.2 427.7,324.4 428.2,272.3 428.7,294.4 429.2,308.9 429.7,303.8 430.2,262.1 430.7,314.9 431.2,290.8 431.7,287.1 432.2,286.6 432.7,312.0 433.2,290.1 433.7,251.5 434.2,255.0 434.7,358.0 435.2,329.8 435.7,358.0 436.2,292.5 436.7,275.3 437.2,302.0 437.7,290.5 438.2,294.2 438.7,276.5 439.2,309.2 439.7,307.9 440.2,327.1 440.7,323.5 441.2,302.9 441.7,301.7 442.2,256.2 442.7,279.0 443.2,260.5 443.7,286.2 444.2,289.5 444.7,295.0 445.2,275.1 445.7,257.3 446.2,270.2 446.7,320.3 447.2,309.6 447.7,274.7 448.0,250.0 448.7,270.3 449.2,276.0 449.7,313.7 450.2,276.2 450.7,283.6 451.2,289.7 451.7,281.6 452.2,281.6 452.7,287.7 453.2,273.5 453.7,319.8 454.2,248.3 454.7,276.1 455.2,281.0 455.7,295.4 456.2,250.0 456.7,336.5 457.2,278.6 457.7,288.8 458.2,297.9 458.7,261.6 459.2,297.1 459.7,309.3 460.2,322.9 460.7,321.4 461.2,325.8 461.7,281.3 462.2,291.1 462.7,279.4 463.2,358.0 463.7,311.6 464.2,293.7 464.7,313.5 465.2,279.7 465.7,295.8 466.2,257.4 466.7,291.9 467.2,313.6 467.7,274.5 468.2,268.2 468.7,288.3 469.2,293.6 469.7,301.8 470.2,298.0 470.7,281.2 471.2,288.4 471.7,251.2 472.2,286.4 472.7,307.8 473.2,325.9 473.7,267.8 474.0,247.0 474.7,269.9 475.2,280.7 475.7,338.2 476.2,299.2 476.7,296.4 477.2,280.0 477.7,261.5 478.2,319.3 478.7,307.3 479.2,281.1 479.7,315.8 480.2,276.0 480.7,307.4 481.2,248.9 481.7,276.9 482.2,288.9 482.7,314.1 483.2,350.6 483.7,287.4" fill="none" stroke="#fafafa" stroke-opacity="0.95" stroke-width="1.45" stroke-linejoin="bevel"/><line x1="84.5" y1="0" x2="84.5" y2="354" stroke="#f0f078" stroke-width="1.4" stroke-dasharray="1.2 0.9"/><rect x="84" y="142" width="1.5" height="70" fill="#e6e27a"/><rect x="0" y="-1" width="486" height="2" fill="#a0a0a0"/><rect x="0" y="354" width="486" height="1" fill="#a0a0a0"/><rect x="0" y="-1" width="1" height="356" fill="#a0a0a0"/><rect x="484" y="-1" width="2" height="356" fill="#a0a0a0"/><circle cx="85.1" cy="141.7" r="6.2" fill="#ee1111"/><circle cx="121.3" cy="92.7" r="6.2" fill="#ffee22"/><circle cx="175.8" cy="185.1" r="6.2" fill="#1a9ce0"/><circle cx="196.6" cy="151.3" r="6.2" fill="#7a28dc"/></svg>
<span class="t" style="left:1297.4px;top:447px;font-size:20px;line-height:20px;color:#fff;">-10.0</span>
<span class="t" style="left:1297.4px;top:518px;font-size:20px;line-height:20px;color:#fff;">-20.0</span>
<span class="t" style="left:1297.4px;top:589px;font-size:20px;line-height:20px;color:#fff;">-30.0</span>
<span class="t" style="left:1297.4px;top:660px;font-size:20px;line-height:20px;color:#fff;">-40.0</span>
<span class="t" style="left:1297.4px;top:731px;font-size:20px;line-height:20px;color:#fff;">-50.0</span>
<span class="t" style="left:1297.4px;top:802px;font-size:20px;line-height:20px;color:#fff;">-60.0</span>
<span class="t" style="left:1364.9px;top:820px;font-size:14.6px;line-height:14.6px;color:#fff;">-60</span>
<span class="t" style="left:1397.9px;top:840px;font-size:14.6px;line-height:14.6px;color:#fff;">-40</span>
<span class="t" style="left:1429.9px;top:820px;font-size:14.6px;line-height:14.6px;color:#fff;">-20</span>
<span class="t" style="left:1469.4px;top:840px;font-size:14.6px;line-height:14.6px;color:#fff;">0</span>
<span class="t" style="left:1497.4px;top:820px;font-size:14.6px;line-height:14.6px;color:#fff;">20</span>
<span class="t" style="left:1529.4px;top:840px;font-size:14.6px;line-height:14.6px;color:#fff;">40</span>
<span class="t" style="left:1562.4px;top:820px;font-size:14.6px;line-height:14.6px;color:#fff;">60</span>
<span class="t" style="left:1594.4px;top:840px;font-size:14.6px;line-height:14.6px;color:#fff;">80</span>
<span class="t" style="left:1622.3px;top:820px;font-size:14.6px;line-height:14.6px;color:#fff;">100</span>
<span class="t" style="left:1655.3px;top:840px;font-size:14.6px;line-height:14.6px;color:#fff;">120</span>
<span class="t" style="left:1687.3px;top:820px;font-size:14.6px;line-height:14.6px;color:#fff;">140</span>
<span class="t" style="left:1719.3px;top:840px;font-size:14.6px;line-height:14.6px;color:#fff;">160</span>
<span class="t" style="left:1752.3px;top:820px;font-size:14.6px;line-height:14.6px;color:#fff;">180</span>
<span class="t" style="left:1784.3px;top:840px;font-size:14.6px;line-height:14.6px;color:#fff;">200</span>
<span class="t" style="left:1817.3px;top:820px;font-size:14.6px;line-height:14.6px;color:#fff;">220</span>
<span class="t" style="left:1486.0px;top:863px;font-size:20px;line-height:20px;color:#fff;">Distance Difference (km)</span>
<span class="t" style="left:1196.1px;top:623.8px;font-size:20px;line-height:20px;color:#fff;transform-origin:50% 50%;transform:rotate(-90deg);">Magnitude (dB)</span>
</div></body></html>
